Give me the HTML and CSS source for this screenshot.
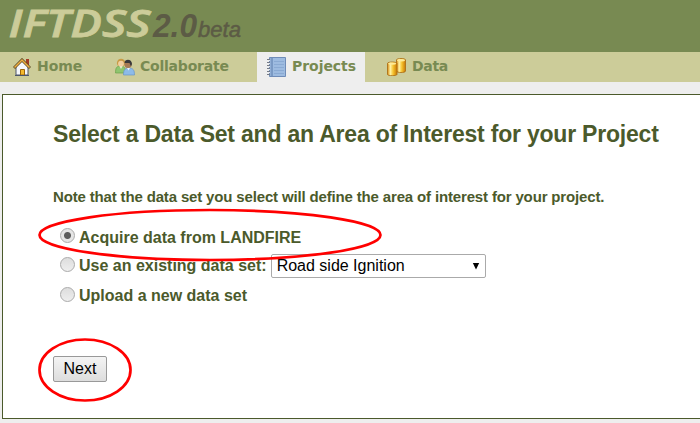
FILE: index.html
```html
<!DOCTYPE html>
<html lang="en">
<head>
<meta charset="utf-8">
<title>IFTDSS 2.0 beta</title>
<link rel="stylesheet" href="styles.css">
</head>
<body>
<header class="banner">
  <svg class="logo" width="260" height="52" viewBox="0 0 260 52" role="img" aria-label="IFTDSS 2.0 beta">
    <text class="logo-name" x="8.500" y="36.500" textLength="142" lengthAdjust="spacingAndGlyphs">IFTDSS</text>
    <text class="logo-version" x="153" y="36.500" textLength="44" lengthAdjust="spacingAndGlyphs">2.0</text>
    <text class="logo-stage" x="198" y="36.500" textLength="43" lengthAdjust="spacingAndGlyphs">beta</text>
  </svg>
</header>
<nav class="tabs">
  <a class="tab tab-home">
    <svg class="icon" viewBox="0 0 18 18">
      <path d="M13 1h3v6h-3z" fill="#a33a24"/>
      <path d="M3 9L9 3l6 6v8H3z" fill="#f7f8fb" stroke="#4c566b"/>
      <path d="M1 10L9 2l8 8" fill="none" stroke="#5d4a25" stroke-width="3"/>
      <path d="M1.500 9.500L9 2l7.500 7.500" fill="none" stroke="#eeb042" stroke-width="1.500"/>
      <path d="M7.500 11.500h4V17h-4z" fill="#f3b92d" stroke="#9c650b"/>
      <path d="M2 17.500h14" stroke="#4c566b"/>
    </svg><span>Home</span></a>
  <a class="tab tab-collab">
    <svg class="icon icon-wide" viewBox="0 0 20 18">
      <path d="M.5 15c0-5 1-7 5-7s5 2 5 7z" fill="#8fc56f" stroke="#6aa04b" stroke-width=".7"/>
      <path d="M4.500 8l1.500 3 1.500-3z" fill="#edf4e2"/>
      <path d="M2 6c-1-7 9-7 8.500 0L9 8H3z" fill="#c99a45"/>
      <circle cx="6" cy="5.700" r="2.900" fill="#f1cfa0"/>
      <path d="M8.500 17c0-5 1.500-7 5.500-7s5.500 2 5.500 7z" fill="#8dbbe8" stroke="#6795c6" stroke-width=".7"/>
      <path d="M12 10l1.500 2.500 1.500-2.500z" fill="#eef5ff"/>
      <circle cx="13" cy="6.500" r="3.500" fill="#a77b55"/>
      <path d="M9.500 5c0-4.500 7.500-4.500 7.500 1l-1 2.500-1.500-3.500z" fill="#39383b"/>
    </svg><span>Collaborate</span></a>
  <a class="tab tab-projects">
    <svg class="icon icon-book" viewBox="0 0 19 20">
      <path d="M2.500 .5h16v19h-16z" fill="#91afd5" stroke="#6f8cb8"/>
      <path d="M5 1v18" stroke="#6585b3"/>
      <path d="M6 1h12v18H6z" fill="#9dbbe0"/>
      <path d="M7 4.500h10M7 7.500h10M7 10.500h10M7 13.500h10M7 16.500h10" stroke="#8aaad3"/>
      <path d="M0 2.500h3M0 5.500h3M0 8.500h3M0 11.500h3M0 14.500h3M0 17.500h3" stroke="#747b88"/>
      <path d="M1 3.500h2M1 6.500h2M1 9.500h2M1 12.500h2M1 15.500h2" stroke="#e5e9ef"/>
    </svg><span>Projects</span></a>
  <a class="tab tab-data">
    <svg class="icon icon-data" viewBox="0 0 19 18">
      <defs><linearGradient id="gold"><stop offset="0" stop-color="#d78a0c"/><stop offset=".3" stop-color="#fff3a6"/><stop offset=".6" stop-color="#f6c22d"/><stop offset="1" stop-color="#c77907"/></linearGradient></defs>
      <path d="M9.500 2c0-2 9-2 9 0v11c0 2-9 2-9 0z" fill="url(#gold)" stroke="#a86a12" stroke-width=".8"/>
      <ellipse cx="14" cy="2.200" rx="4" ry="1.200" fill="#ffeb96"/>
      <path d="M.5 5.500c0-2 9.500-2 9.500 0v11c0 1.500-9.500 1.500-9.500 0z" fill="url(#gold)" stroke="#a86a12" stroke-width=".8"/>
      <ellipse cx="5.200" cy="5.600" rx="4" ry="1.200" fill="#ffeb96"/>
    </svg><span>Data</span></a>
</nav>
<main class="panel">
  <h1 class="title">Select a Data Set and an Area of Interest for your Project</h1>
  <p class="note">Note that the data set you select will define the area of interest for your project.</p>
  <div class="options">
    <div class="option option-first"><i class="radio checked"></i><span>Acquire data from LANDFIRE</span></div>
    <div class="option"><i class="radio"></i><span>Use an existing data set:</span>
      <div class="select"><span>Road side Ignition</span><svg width="8" height="8" viewBox="0 0 8 8"><path d="M.8 1h6.400L4 7.500z"/></svg></div>
    </div>
    <div class="option"><i class="radio"></i><span>Upload a new data set</span></div>
  </div>
  <button class="next">Next</button>
</main>
<svg class="marks" width="700" height="423" viewBox="0 0 700 423">
  <ellipse cx="210" cy="235" rx="170.500" ry="25"/>
  <ellipse cx="85" cy="370" rx="45.500" ry="30.500"/>
</svg>
</body>
</html>
```
FILE: styles.css
```css
* { box-sizing: border-box; }
body { margin: 0; height: 423px; overflow: hidden; background: #eee; color: #4b5a2b; font-family: "Liberation Sans", Arial, sans-serif; position: relative; }
.banner { height: 52px; background: #788a52; }
.logo { display: block; }
.logo-name { font: italic 600 38.5px "Open Sans", sans-serif; fill: #cccc99; stroke: #cccc99; stroke-width: .8px; }
.logo-version { font: italic bold 34px "Liberation Sans", sans-serif; fill: #5c5b45; }
.logo-stage { font: italic 22px "Liberation Sans", sans-serif; fill: #5c5b45; stroke: #5c5b45; stroke-width: .5px; }
.tabs { display: flex; height: 30px; background: #cccc99; }
.tab { display: flex; align-items: center; height: 30px; color: #788a52; font: bold 14px/28px "DejaVu Sans", Verdana, sans-serif; letter-spacing: -.05px; white-space: nowrap; }
.tab span { height: 30px; }
.icon { width: 18px; height: 18px; flex: none; margin-right: 6px; }
.icon-wide { width: 20px; margin-right: 5px; }
.icon-book { width: 19px; height: 20px; margin: 0 6px 0 0; }
.icon-data { width: 19px; height: 18px; }
.tab-home { width: 115px; padding-left: 13px; }
.tab-collab { width: 142px; letter-spacing: -.22px; }
.tab-projects { width: 108px; padding-left: 10px; background: #eee; }
.tab-data { padding-left: 22px; letter-spacing: -.3px; }
.panel { height: 325px; margin: 12px -2px 0 2px; padding: 24px 50px; border: 1px solid #4b5a2b; background: #fff; }
.title { margin: 0; font-size: 23px; line-height: 30px; letter-spacing: -.21px; white-space: nowrap; }
.note { margin: 38px 0 0; font-size: 15px; font-weight: bold; line-height: 20px; letter-spacing: -.155px; white-space: nowrap; }
.options { padding: 17px 0 0 7px; }
.option { display: flex; align-items: center; height: 30px; font-size: 16px; font-weight: bold; line-height: 20px; white-space: nowrap; }
.option-first { height: 27px; }
.radio { width: 15px; height: 15px; margin: -4px 4px 0 0; border: 1px solid #aaa; border-radius: 50%; background: linear-gradient(#ddd, #eee); }
.checked { background: radial-gradient(circle, #5c5c5c 3px, #e5e5e5 4px); }
.select { display: flex; align-items: center; justify-content: space-between; width: 215px; height: 24px; margin-left: 4px; padding: 0 5px; border: 1px solid #aaa; border-radius: 2px; color: #000; font-weight: normal; }
.next { display: block; width: 54px; height: 26px; margin-top: 45px; padding: 0; border: 1px solid #999; border-radius: 2px; background: linear-gradient(#f4f4f4, #ddd); color: #000; font: 16px/22px "Liberation Sans", Arial, sans-serif; }
.marks { position: absolute; left: 0; top: 0; fill: none; stroke: #f00; stroke-width: 2.7px; }
```
